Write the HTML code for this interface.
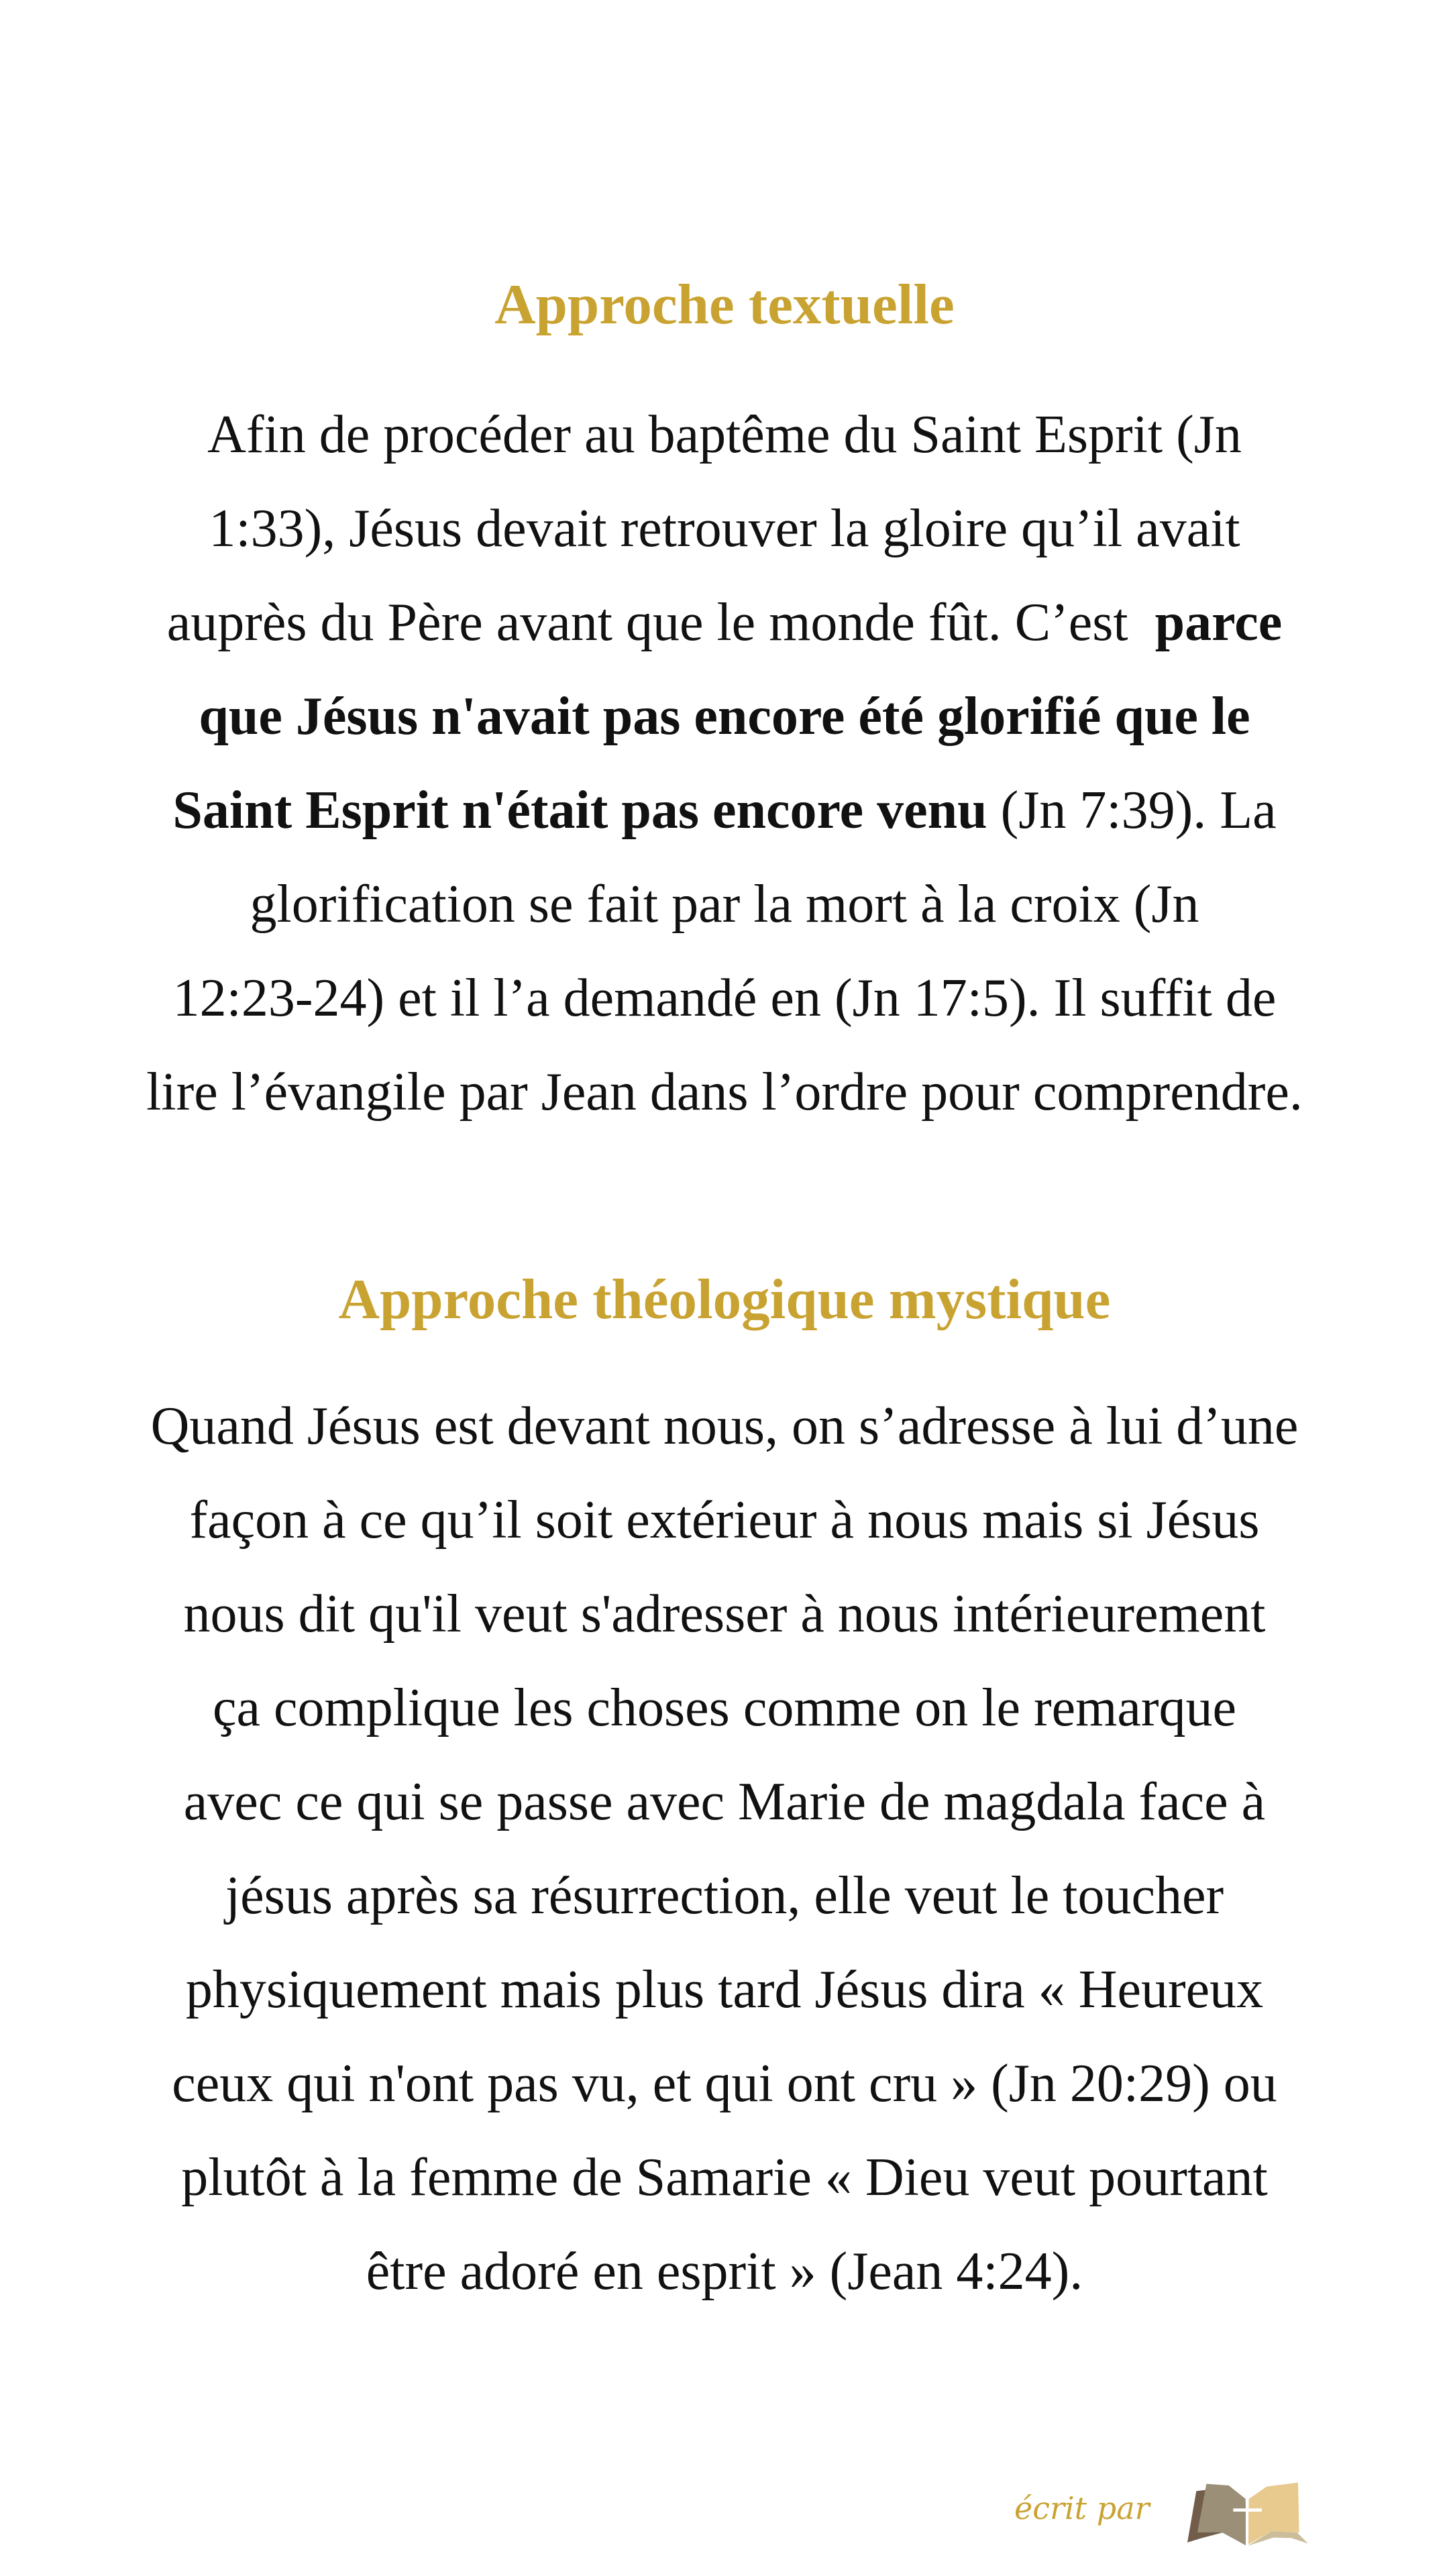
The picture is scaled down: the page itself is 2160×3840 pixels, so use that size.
<!DOCTYPE html>
<html><head><meta charset="utf-8"><style>
html,body{margin:0;padding:0;background:#fff;}
body{width:2160px;height:3840px;position:relative;overflow:hidden;font-family:"Liberation Serif",serif;}
.t{position:absolute;left:0;width:2160px;text-align:center;color:#c9a332;font-weight:bold;font-size:85px;line-height:100px;}
.l{position:absolute;left:0;width:2160px;text-align:center;color:#111;font-size:80px;line-height:140px;white-space:nowrap;}
b{font-weight:bold;}
.sig{position:absolute;left:1512px;top:3712px;font-family:"DejaVu Serif",serif;font-style:italic;color:#c9a332;font-size:46px;}
</style></head><body>
<div class="t" style="top:404px">Approche textuelle</div>
<div class="l" style="top:578px">Afin de procéder au baptême du Saint Esprit (Jn</div>
<div class="l" style="top:718px">1:33), Jésus devait retrouver la gloire qu’il avait</div>
<div class="l" style="top:858px">auprès du Père avant que le monde fût. C’est&nbsp; <b>parce</b></div>
<div class="l" style="top:998px"><b>que Jésus n'avait pas encore été glorifié que le</b></div>
<div class="l" style="top:1138px"><b>Saint Esprit n'était pas encore venu</b> (Jn 7:39). La</div>
<div class="l" style="top:1278px">glorification se fait par la mort à la croix (Jn</div>
<div class="l" style="top:1418px">12:23-24) et il l’a demandé en (Jn 17:5). Il suffit de</div>
<div class="l" style="top:1558px">lire l’évangile par Jean dans l’ordre pour comprendre.</div>

<div class="t" style="top:1887px">Approche théologique mystique</div>
<div class="l" style="top:2056px">Quand Jésus est devant nous, on s’adresse à lui d’une</div>
<div class="l" style="top:2196px">façon à ce qu’il soit extérieur à nous mais si Jésus</div>
<div class="l" style="top:2336px">nous dit qu'il veut s'adresser à nous intérieurement</div>
<div class="l" style="top:2476px">ça complique les choses comme on le remarque</div>
<div class="l" style="top:2616px">avec ce qui se passe avec Marie de magdala face à</div>
<div class="l" style="top:2756px">jésus après sa résurrection, elle veut le toucher</div>
<div class="l" style="top:2896px">physiquement mais plus tard Jésus dira « Heureux</div>
<div class="l" style="top:3036px">ceux qui n'ont pas vu, et qui ont cru » (Jn 20:29) ou</div>
<div class="l" style="top:3176px">plutôt à la femme de Samarie « Dieu veut pourtant</div>
<div class="l" style="top:3316px">être adoré en esprit » (Jean 4:24).</div>

<div class="sig">écrit par</div>
<svg style="position:absolute;left:1480px;top:3660px" width="520" height="180" viewBox="0 0 1560 540">
<polygon points="870,390 910,160 955,155 1135,405 1030,345 935,370" fill="#715d4a"/>
<polygon points="955,128 1055,135 1130,195 1135,405 1025,345 915,345" fill="#9c8f78"/>
<polygon points="1140,405 1245,340 1360,345 1410,395 1335,370 1255,368" fill="#cbbd99"/>
<polygon points="1145,195 1225,140 1365,122 1370,345 1245,340 1140,400" fill="#e8ca8e"/>
<rect x="1075" y="238" width="128" height="14" fill="#fff"/>
<rect x="1131" y="195" width="12" height="210" fill="#fff"/>
</svg>
</body></html>
